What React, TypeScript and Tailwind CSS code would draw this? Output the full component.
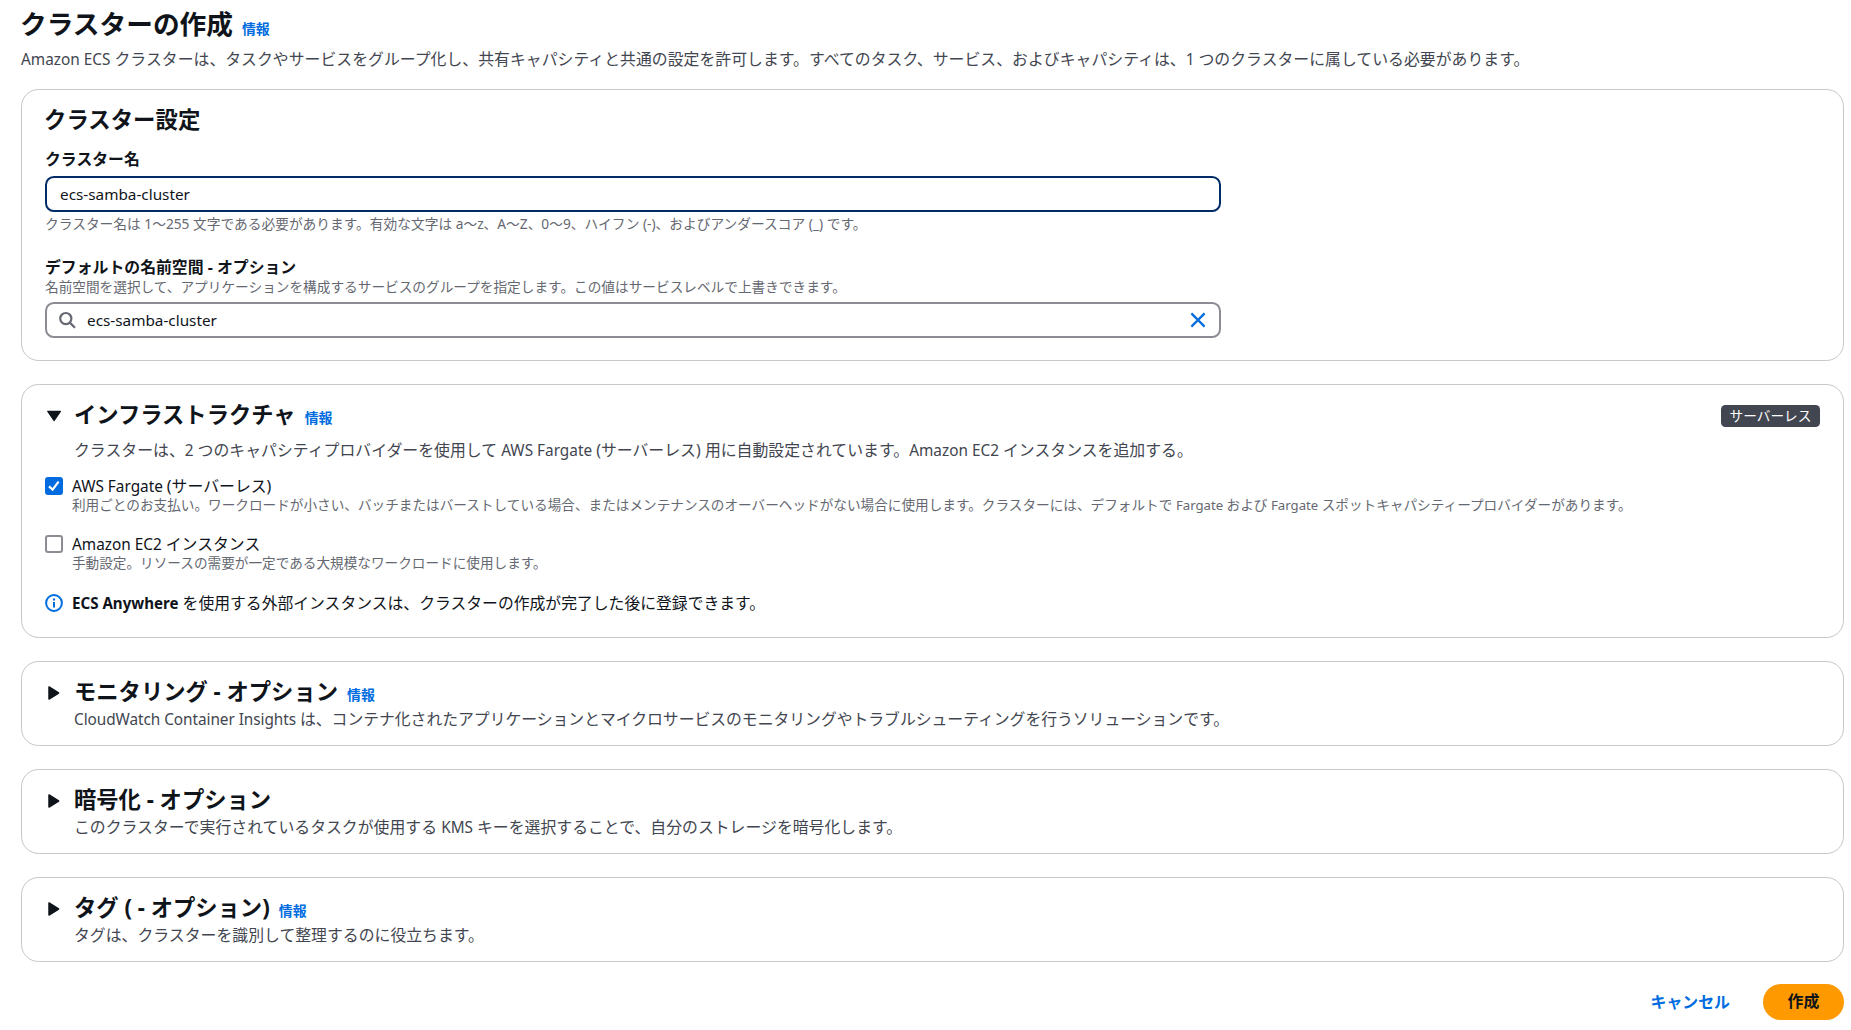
import { useState } from "react";

// Latin runs are set a touch smaller than the kana and kanji around them
function Mixed({ text }: { text: string }) {
  return (
    <>
      {text.split(/([A-Za-z0-9][A-Za-z0-9 ]*)/).map((part, i) =>
        i % 2 ? (
          <span key={i} className="text-[0.968em]">{part}</span>
        ) : (
          part
        )
      )}
    </>
  );
}

function InfoLink() {
  return (
    <a href="#" className="ml-[9px] text-[13.9px] font-bold leading-[18px] text-[#006ce0]">
      情報
    </a>
  );
}

function Caret({ open }: { open?: boolean }) {
  return (
    <svg viewBox="0 0 18 18" className="h-[18px] w-[18px] shrink-0 text-[#0f141a]" fill="currentColor" stroke="currentColor" strokeWidth="1.5" strokeLinejoin="round">
      {open ? <path d="M2.9 4.4h12.4L9.1 13.4z" /> : <path d="M4 3v12l9.6-6z" />}
    </svg>
  );
}

type SectionProps = {
  title: string;
  desc: string;
  descClass?: string;
  info?: boolean;
};

// Collapsed container with a header only
function CollapsedSection({ title, desc, descClass = "", info }: SectionProps) {
  return (
    <section className="mt-[23px] flex h-[85px] rounded-[17.6px] border border-[#c6c6cd] pl-[23px] pt-[17px]">
      <div className="pt-[5px]">
        <Caret />
      </div>
      <div className="ml-[11px]">
        <div className="flex h-[26px] items-baseline">
          <h2 className="text-[22.3px] font-bold leading-[26px]">{title}</h2>
          {info && <InfoLink />}
        </div>
        <p className={`mt-[3px] text-[15.86px] leading-[22px] text-[#424650] ${descClass}`}>
          <Mixed text={desc} />
        </p>
      </div>
    </section>
  );
}

type OptionProps = {
  checked: boolean;
  onToggle: () => void;
  label: string;
  hint: string;
};

function Option({ checked, onToggle, label, hint }: OptionProps) {
  return (
    <div className="flex">
      <button
        onClick={onToggle}
        className={
          checked
            ? "mt-[2px] h-[18px] w-[18px] rounded-[3px] bg-[#006ce0]"
            : "mt-[2px] h-[18px] w-[18px] rounded-[3px] border-2 border-[#8c8c94] bg-white"
        }
      >
        {checked && (
          <svg viewBox="0 0 18 18" className="h-[18px] w-[18px]" fill="none" stroke="white" strokeWidth="2.2">
            <path d="M4 9.4l3.6 3.2 6-8" />
          </svg>
        )}
      </button>
      <div className="ml-[9px]">
        <p className="text-[15.86px] leading-[22px] text-[#0f141a]">
          <Mixed text={label} />
        </p>
        <p className="-mt-[1px] text-[13.64px] leading-[18px] text-[#656871]">
          <Mixed text={hint} />
        </p>
      </div>
    </div>
  );
}

export default function App() {
  const [name, setName] = useState("ecs-samba-cluster");
  const [namespace, setNamespace] = useState("ecs-samba-cluster");
  const [fargate, setFargate] = useState(true);
  const [ec2, setEc2] = useState(false);

  return (
    <div className="h-[1030px] overflow-hidden whitespace-nowrap bg-white pl-[21px] pr-[7px] pt-[8px] font-['Noto_Sans','Noto_Sans_CJK_JP',sans-serif] text-[#0f141a]">
      <header>
        <div className="flex h-[32px] items-baseline">
          <h1 className="-ml-[1px] text-[26.7px] font-bold leading-[32px]">クラスターの作成</h1>
          <InfoLink />
        </div>
        <p className="mt-[8px] text-[15.86px] leading-[22px] tracking-[0.01px] text-[#424650]">
          <Mixed text="Amazon ECS クラスターは、タスクやサービスをグループ化し、共有キャパシティと共通の設定を許可します。すべてのタスク、サービス、およびキャパシティは、1 つのクラスターに属している必要があります。" />
        </p>
      </header>

      {/* Cluster settings */}
      <section className="mt-[19px] h-[272px] rounded-[17.6px] border border-[#c6c6cd] px-[23px] pt-[17px]">
        <h2 className="-ml-[1px] text-[22.4px] font-bold leading-[26px]">クラスター設定</h2>

        <label className="mt-[15px] block text-[15.86px] font-bold leading-[22px]">クラスター名</label>
        <input
          value={name}
          onChange={(e) => setName(e.target.value)}
          className="mt-[6px] block h-[36px] w-[1176px] rounded-[8.8px] border-2 border-[#002b66] px-[13px] pb-[1px] text-[15.3px] leading-[22px] outline-none"
        />
        <p className="mt-[3px] text-[13.72px] leading-[18px] text-[#656871]">
          クラスター名は 1～255 文字である必要があります。有効な文字は a～z、A～Z、0～9、ハイフン (-)、およびアンダースコア (_) です。
        </p>

        <label className="mt-[23px] block text-[15.86px] font-bold leading-[22px]">デフォルトの名前空間 - オプション</label>
        <p className="text-[13.67px] leading-[18px] text-[#656871]">
          名前空間を選択して、アプリケーションを構成するサービスのグループを指定します。この値はサービスレベルで上書きできます。
        </p>
        <div className="mt-[6px] flex h-[36px] w-[1176px] items-center rounded-[8.8px] border-2 border-[#8c8c94] pl-[11px] pr-[12px]">
          <svg viewBox="0 0 18 18" className="h-[18px] w-[18px] shrink-0" fill="none" stroke="#656871" strokeWidth="2.2">
            <circle cx="7.8" cy="7.6" r="5.6" />
            <path d="M11.8 11.6l5.2 5.2" />
          </svg>
          <input
            value={namespace}
            onChange={(e) => setNamespace(e.target.value)}
            className="ml-[11px] flex-1 pb-[1px] text-[15.3px] leading-[22px] outline-none"
          />
          <button onClick={() => setNamespace("")}>
            <svg viewBox="0 0 18 18" className="h-[18px] w-[18px]" fill="none" stroke="#006ce0" strokeWidth="2.2">
              <path d="M2.4 2.4l13.2 13.2M15.6 2.4L2.4 15.6" />
            </svg>
          </button>
        </div>
      </section>

      {/* Infrastructure */}
      <section className="mt-[23px] h-[254px] rounded-[17.6px] border border-[#c6c6cd] px-[23px] pt-[17px]">
        <div className="flex">
          <div className="pt-[5px]">
            <Caret open />
          </div>
          <div className="ml-[11px] flex-1">
            <div className="flex h-[26px] items-baseline">
              <h2 className="text-[22.3px] font-bold leading-[26px]">インフラストラクチャ</h2>
              <InfoLink />
            </div>
            <p className="mt-[11px] text-[15.86px] leading-[22px] tracking-[0.01px] text-[#424650]">
              <Mixed text="クラスターは、2 つのキャパシティプロバイダーを使用して AWS Fargate (サーバーレス) 用に自動設定されています。Amazon EC2 インスタンスを追加する。" />
            </p>
          </div>
          <span className="mt-[3px] flex h-[22px] w-[99px] items-center justify-center rounded-[4.4px] bg-[#424650] text-[13.7px] text-white">
            サーバーレス
          </span>
        </div>

        <div className="mt-[14px]">
          <Option
            checked={fargate}
            onToggle={() => setFargate(!fargate)}
            label="AWS Fargate (サーバーレス)"
            hint="利用ごとのお支払い。ワークロードが小さい、バッチまたはバーストしている場合、またはメンテナンスのオーバーヘッドがない場合に使用します。クラスターには、デフォルトで Fargate および Fargate スポットキャパシティープロバイダーがあります。"
          />
        </div>
        <div className="mt-[19px]">
          <Option
            checked={ec2}
            onToggle={() => setEc2(!ec2)}
            label="Amazon EC2 インスタンス"
            hint="手動設定。リソースの需要が一定である大規模なワークロードに使用します。"
          />
        </div>

        <div className="mt-[20px] flex">
          <svg viewBox="0 0 18 18" className="mt-[2px] h-[18px] w-[18px]" fill="none" stroke="#006ce0" strokeWidth="2">
            <circle cx="9" cy="9" r="7.9" />
            <path d="M9 8v5.6M9 4.4v2" />
          </svg>
          <p className="ml-[9px] text-[15.82px] leading-[22px]">
            <b className="text-[15.1px]">ECS Anywhere</b> を使用する外部インスタンスは、クラスターの作成が完了した後に登録できます。
          </p>
        </div>
      </section>

      <CollapsedSection
        title="モニタリング - オプション"
        desc="CloudWatch Container Insights は、コンテナ化されたアプリケーションとマイクロサービスのモニタリングやトラブルシューティングを行うソリューションです。"
        descClass="tracking-[-0.055px]"
        info
      />
      <CollapsedSection
        title="暗号化 - オプション"
        desc="このクラスターで実行されているタスクが使用する KMS キーを選択することで、自分のストレージを暗号化します。"
      />
      <CollapsedSection
        title="タグ ( - オプション)"
        desc="タグは、クラスターを識別して整理するのに役立ちます。"
        info
      />

      <footer className="mt-[22px] flex items-center justify-end">
        <button className="mr-[33px] text-[15.9px] font-bold leading-[22px] text-[#006ce0]">キャンセル</button>
        <button className="h-[36px] w-[81px] rounded-full bg-[#ff9900] text-[15.9px] font-bold">作成</button>
      </footer>
    </div>
  );
}
